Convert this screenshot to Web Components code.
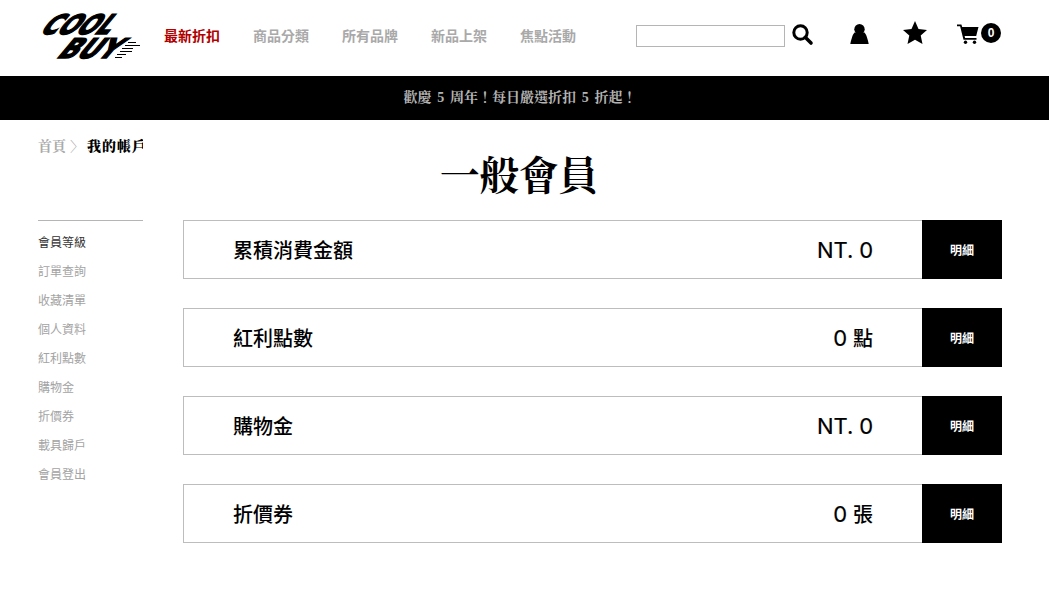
<!DOCTYPE html>
<html lang="zh-Hant"><head><meta charset="utf-8"><title>一般會員</title>
<style>
html,body{margin:0;padding:0;background:#fff}
body{width:1049px;height:599px;overflow:hidden;font-family:"Noto Sans CJK TC",sans-serif}
</style></head><body>
<site-header></site-header>
<promo-bar>歡慶 5 周年！每日嚴選折扣 5 折起！</promo-bar>
<account-page>
  <side-link slot="side" active>會員等級</side-link>
  <side-link slot="side">訂單查詢</side-link>
  <side-link slot="side">收藏清單</side-link>
  <side-link slot="side">個人資料</side-link>
  <side-link slot="side">紅利點數</side-link>
  <side-link slot="side">購物金</side-link>
  <side-link slot="side">折價券</side-link>
  <side-link slot="side">載具歸戶</side-link>
  <side-link slot="side">會員登出</side-link>
  <stat-row label="累積消費金額" num="NT. 0"></stat-row>
  <stat-row label="紅利點數" num="0" unit="點"></stat-row>
  <stat-row label="購物金" num="NT. 0"></stat-row>
  <stat-row label="折價券" num="0" unit="張"></stat-row>
</account-page>
<script>
const SERIF='"Liberation Serif","Noto Serif CJK TC","Noto Sans CJK TC",serif';
function def(name,html,init){customElements.define(name,class extends HTMLElement{
  constructor(){super();this.attachShadow({mode:'open'}).innerHTML=html;}
  connectedCallback(){init&&init(this)}
});}
def('site-header',`<style>
:host{display:flex;height:76px;box-sizing:border-box;padding:0 48px 0 38px;align-items:flex-start;color:#000}
svg{display:block;flex:none;overflow:visible}
.logo{width:105px;height:50px;margin-top:12px;margin-right:21px}
.logo text{font:700 27px "DejaVu Sans",sans-serif;stroke:#000;stroke-width:1.6}
nav{display:flex;gap:33px;margin-top:24px;font:700 14px/22px "Noto Sans CJK TC",sans-serif;color:#a9a9a9;width:472px;flex:none}
nav b{font-weight:700}nav .on{color:#b00000}
input{box-sizing:border-box;width:149px;height:22px;margin:25px 0 0;border:1px solid #b5b5b5;padding:0;background:#fff;flex:none}
.search{margin:24px 0 0 7px}.user{margin:24px 0 0 37px}.star{margin:21px 0 0 34px}.cart{margin:24px 0 0 30px}
.badge{box-sizing:border-box;width:20px;height:20px;border-radius:50%;background:#000;color:#fff;font:700 12px/20px "Liberation Sans",sans-serif;text-align:center;margin:23px 0 0 2px;flex:none}
</style>
<svg class="logo" viewBox="0 0 105 50" role="img" aria-label="COOL BUY">
<g transform="skewX(-40)"><text x="19" y="22" textLength="69" lengthAdjust="spacingAndGlyphs">COOL</text>
<text x="56" y="46" textLength="58" lengthAdjust="spacingAndGlyphs">BUY</text></g>
<path d="M90 30.500h8M87 33.500h15M84 36.500h11M82 39.500h12M79 42.500h9M77 45.500h7" stroke="#000" stroke-width="1" fill="none"/>
</svg>
<nav><b class="on">最新折扣</b><b>商品分類</b><b>所有品牌</b><b>新品上架</b><b>焦點活動</b></nav>
<input type="text" aria-label="搜尋">
<svg class="search" width="21" height="21" viewBox="0 0 21 21"><circle cx="8.500" cy="8.500" r="6.700" fill="none" stroke="#000" stroke-width="3"/><path d="M13.500 13.500l5.500 5.500" stroke="#000" stroke-width="3.600" stroke-linecap="round"/></svg>
<svg class="user" width="19" height="20" viewBox="0 0 19 20"><circle cx="9.500" cy="5.200" r="5.200"/><path d="M4.500 8.500h10c1.300 1.500 1.900 3 2.500 5 .6 2 1.300 4 1.700 6.500H.3c.4-2.500 1.100-4.500 1.700-6.500.6-2 1.200-3.500 2.500-5z"/></svg>
<svg class="star" width="24" height="24" viewBox="0 0 24 24"><path d="M12 0l3.500 8 8.500.9-6.300 5.700 1.800 8.400-7.500-4.300L4.500 23l1.800-8.400L0 8.900 8.500 8z"/></svg>
<svg class="cart" width="22" height="20" viewBox="0 0 22 20"><path d="M0 .5h4.400l.8 2.500H21.500l-2.300 9H7.600l.5 2h11.400v1.700H6.500L3.100 2.300H0z"/><circle cx="8.500" cy="18.300" r="1.700"/><circle cx="17.500" cy="18.300" r="1.700"/></svg>
<span class="badge">0</span>`);
def('promo-bar',`<style>:host{display:block;box-sizing:border-box;padding-right:9px;height:44px;background:#000;color:#b3b3b3;text-align:center;word-spacing:2.3px;font:700 14px/44px ${SERIF}}</style><slot></slot>`);
def('account-page',`<style>
:host{display:grid;grid-template-columns:105px 819px;column-gap:40px;padding:0 0 0 38px;grid-template-rows:100px auto}
.crumb{grid-column:1;grid-row:1;width:105px;overflow:hidden;white-space:nowrap;font:700 14px/20px ${SERIF};color:#aaa;padding-top:17px;box-sizing:border-box;height:100px}
.crumb b{color:#000;letter-spacing:1px}.crumb i{font-style:normal;font-weight:400;margin:0 3px 0 4px}
h1{position:absolute;left:0;width:1038px;top:151px;margin:0;text-align:center;font:700 39.500px/52px ${SERIF};color:#000}
aside{grid-column:1;grid-row:2;border-top:1px solid #b5b5b5;padding-top:6px;display:flex;flex-direction:column}
main{grid-column:2;grid-row:2;display:flex;flex-direction:column;gap:29px}
</style>
<div class="crumb">首頁<i>〉</i><b>我的帳戶</b></div><h1>一般會員</h1>
<aside><slot name="side"></slot></aside><main><slot></slot></main>`);
def('side-link',`<style>:host{display:block;font:400 12px/29px "Noto Sans CJK TC",sans-serif;color:#a3a3a3}:host([active]){color:#333}</style><slot></slot>`);
def('stat-row',`<style>
:host{display:flex;height:59px;box-sizing:border-box;border:1px solid #bdbdbd;border-right:0;align-items:center;color:#000}
.l{flex:1;padding-left:49px;font:500 20px/1 "Noto Sans CJK TC",sans-serif}
.v{display:flex;align-items:center;gap:6px;margin-right:49px}
.n{font:400 22px/1 "Inter",sans-serif;-webkit-text-stroke:.2px #000;letter-spacing:-.1px}
.u{font:500 20px/1 "Noto Sans CJK TC",sans-serif}
.b{width:80px;align-self:stretch;margin:-1px 0;background:#000;color:#fff;display:flex;align-items:center;justify-content:center;font:700 12px/1 "Noto Sans CJK TC",sans-serif}
</style><div class="l"></div><div class="v"><span class="n"></span><span class="u"></span></div><div class="b">明細</div>`,el=>{
 const r=el.shadowRoot;r.querySelector('.l').textContent=el.getAttribute('label');
 r.querySelector('.n').textContent=el.getAttribute('num');
 const u=r.querySelector('.u');if(el.hasAttribute('unit'))u.textContent=el.getAttribute('unit');else u.remove();
});
</script>
</body></html>
